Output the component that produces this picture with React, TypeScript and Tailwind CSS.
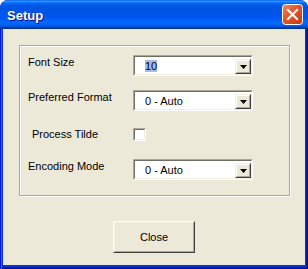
import React from "react";

function Combo({ value, selected }: { value: string; selected?: boolean }) {
  return (
    <div className="w-[120px] h-[21px] border-t border-l border-[#aca899] border-b-white border-r-white border-b border-r">
      <div className="h-full border-t border-l border-t-[#716f64] border-l-[#716f64] border-b border-r border-b-[#f1efe2] border-r-[#f1efe2] bg-white flex items-start">
        <span className={`mt-[3px] ml-[10px] leading-[12px] text-[11px] text-black ${selected ? "bg-[#a3bde9]" : ""}`}>{value}</span>
        <div className="ml-auto mt-[2px] w-[16px] h-[15px] border-t border-l border-t-[#f1efe2] border-l-[#f1efe2] border-b border-r border-b-[#404040] border-r-[#404040]">
          <div className="w-full h-full border-t border-l border-t-white border-l-white border-b border-r border-b-[#aca899] border-r-[#aca899] bg-[#ece9d8] flex items-center justify-center">
            <svg width="7" height="4" viewBox="0 0 7 4">
              <path d="M0 0H7L3.5 4Z" fill="#000" />
            </svg>
          </div>
        </div>
      </div>
    </div>
  );
}

export default function App() {
  return (
    <div className="w-[308px] h-[269px] flex flex-col rounded-t-[8px] overflow-hidden bg-[#0831d9] font-['Liberation_Sans',sans-serif] text-black">
      <div className="h-[29px] shrink-0 flex items-center justify-between pl-[7px] pr-[5px] bg-[linear-gradient(180deg,#0058ee_0%,#3593ff_4%,#288eff_6%,#127dff_8%,#036ffc_10%,#0262ee_14%,#0057e5_20%,#0054e3_24%,#0055eb_56%,#005bf5_66%,#026afe_76%,#0062ef_86%,#0052d6_92%,#0040ab_94%,#003092_100%)]">
        <span className="text-white font-bold text-[13px] leading-[15px] [text-shadow:1px_1px_#0f1089] mt-[1px]">Setup</span>
        <svg width="21" height="21" viewBox="0 0 21 21">
          <defs>
            <linearGradient id="cg" x1="0" y1="0" x2="1" y2="1">
              <stop offset="0" stopColor="#f08a6c" />
              <stop offset="0.45" stopColor="#e0542b" />
              <stop offset="1" stopColor="#c23a12" />
            </linearGradient>
          </defs>
          <rect x="0.5" y="0.5" width="20" height="20" rx="3" fill="url(#cg)" stroke="#fff" strokeWidth="1" />
          <path d="M6 6L15 15M15 6L6 15" stroke="#fff" strokeWidth="2.2" strokeLinecap="square" />
        </svg>
      </div>
      <div className="flex-1 flex flex-col px-[3px] pb-[4px] bg-[#0831d9] shadow-[inset_1px_0_#0019cf,inset_2px_0_#166aee,inset_-1px_-1px_#00138c,inset_-2px_-2px_#001ea0,inset_-3px_-3px_#003bda]">
        <div className="flex-1 bg-[#ece9d8] flex flex-col pl-[16px] pt-[16px] text-[11px] leading-[13px]">
          <div className="w-[271px] h-[151px] border border-[#aca899] shadow-[inset_1px_1px_#fff,1px_1px_#fff] pl-[8px] pt-[9px] flex flex-col">
            <div className="flex items-start h-[21px]">
              <span className="w-[105px] mt-[1px]">Font Size</span>
              <Combo value="10" selected />
            </div>
            <div className="flex items-start h-[21px] mt-[14px]">
              <span className="w-[105px] mt-[1px]">Preferred Format</span>
              <Combo value="0 - Auto" />
            </div>
            <div className="flex items-start h-[13px] mt-[17px]">
              <span className="w-[105px] pl-[4px]">Process Tilde</span>
              <div className="w-[13px] h-[13px] border-t border-l border-[#aca899] border-b-white border-r-white border-b border-r">
                <div className="w-full h-full border-t border-l border-t-[#716f64] border-l-[#716f64] border-b border-r border-b-[#f1efe2] border-r-[#f1efe2] bg-white" />
              </div>
            </div>
            <div className="flex items-start h-[21px] mt-[18px]">
              <span className="w-[105px] mt-[1px]">Encoding Mode</span>
              <Combo value="0 - Auto" />
            </div>
          </div>
          <div className="mt-[25px] ml-[94px] w-[82px] h-[32px] border-t border-l border-t-white border-l-white border-b border-r border-b-[#404040] border-r-[#404040]">
            <div className="w-full h-full border-t border-l border-t-[#f1efe2] border-l-[#f1efe2] border-b border-r border-b-[#aca899] border-r-[#aca899] bg-[#ece9d8] flex items-center justify-center text-[11px]">
              Close
            </div>
          </div>
        </div>
      </div>
    </div>
  );
}
